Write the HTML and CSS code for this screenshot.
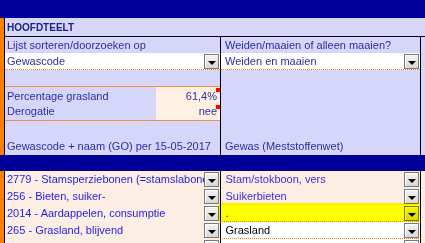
FILE: index.html
```html
<!DOCTYPE html>
<html>
<head>
<meta charset="utf-8">
<link rel="stylesheet" href="styles.css">
</head>
<body>
<div class="page">
  <div class="band top"></div>
  <div class="sec">
    <div class="edge"></div>
    <div class="main">
      <div class="hdr">HOOFDTEELT</div>
      <div class="cols">
        <div class="col left">
          <div class="lbl">Lijst sorteren/doorzoeken op</div>
          <div class="sel"><span class="txt">Gewascode</span><i class="btn"></i></div>
          <div class="gap"></div>
          <div class="box">
            <div class="kv a"><span class="k">Percentage grasland</span><span class="val">61,4%<b class="mark"></b></span></div>
            <div class="kv b"><span class="k">Derogatie</span><span class="val">nee<b class="mark"></b></span></div>
          </div>
          <div class="gap2"></div>
          <div class="lbl last">Gewascode + naam (GO) per 15-05-2017</div>
        </div>
        <div class="col right">
          <div class="lbl">Weiden/maaien of alleen maaien?</div>
          <div class="sel"><span class="txt">Weiden en maaien</span><i class="btn"></i></div>
          <div class="fill"></div>
          <div class="lbl last">Gewas (Meststoffenwet)</div>
        </div>
        <div class="strip"></div>
      </div>
    </div>
  </div>
  <div class="band mid"></div>
  <div class="sec lower">
    <div class="edge"></div>
    <div class="main rows">
      <div class="row">
        <div class="cl cream"><span class="t">2779 - Stamsperziebonen (=stamslabonen)</span><i class="btn"></i></div>
        <div class="cr cream"><span class="t v">Stam/stokboon, vers</span><i class="btn"></i></div>
        <div class="tail"></div>
      </div>
      <div class="row">
        <div class="cl cream"><span class="t">256 - Bieten, suiker-</span><i class="btn"></i></div>
        <div class="cr cream"><span class="t v">Suikerbieten</span><i class="btn"></i></div>
        <div class="tail"></div>
      </div>
      <div class="row">
        <div class="cl cream"><span class="t">2014 - Aardappelen, consumptie</span><i class="btn"></i></div>
        <div class="cr white"><span class="t k2">.</span><i class="btn"></i></div>
        <div class="tail"></div>
      </div>
      <div class="row">
        <div class="cl cream"><span class="t">265 - Grasland, blijvend</span><i class="btn"></i></div>
        <div class="cr white"><span class="t k2">Grasland</span><i class="btn"></i></div>
        <div class="tail"></div>
      </div>
      <div class="row">
        <div class="cl cream"><span class="t"></span><i class="btn"></i></div>
        <div class="cr white"><span class="t k2"></span><i class="btn"></i></div>
        <div class="tail"></div>
      </div>
      <div class="marker"></div>
    </div>
  </div>
</div>
</body>
</html>
```
FILE: styles.css
```css
html, body {
  margin: 0;
  padding: 0;
  background: #d6d6fa;
}
.page {
  width: 425px;
  height: 243px;
  overflow: hidden;
  font-family: "Liberation Sans", Arial, sans-serif;
  font-size: 11px;
  color: #2e2e9e;
  background: #d6d6fa;
}
.band {
  background: #000099;
}
.band.top { height: 18px; }
.band.mid { height: 16px; }
.sec {
  display: flex;
}
.edge {
  width: 4px;
  background: #ff8000;
  border-right: 1px solid #000;
  flex: none;
}
.main {
  width: 420px;
  display: flex;
  flex-direction: column;
}
.hdr {
  height: 18px;
  line-height: 19px;
  border-bottom: 1px solid #000;
  font-weight: bold;
  font-size: 10px;
  color: #202080;
  padding-left: 2px;
}
.cols {
  display: flex;
}
.col {
  display: flex;
  flex-direction: column;
}
.col.left { width: 215px; }
.col.right {
  width: 199px;
  border-left: 1px solid #000;
  border-right: 1px solid #000;
}
.strip { width: 4px; }
.lbl {
  height: 16px;
  line-height: 16px;
  padding-left: 2px;
  white-space: nowrap;
}
.lbl.last {
  height: 17px;
  line-height: 17px;
}
.right .lbl { padding-left: 4px; }
.sel {
  height: 16px;
  background: #fff;
  border-bottom: 1px dotted #ff8000;
  display: flex;
  align-items: center;
  justify-content: space-between;
  padding-left: 2px;
  padding-right: 1px;
}
.right .sel { padding-left: 4px; }
.gap { height: 16px; }
.gap2 { height: 17px; }
.fill { flex: 1; }
.box {
  border-top: 1px solid #f09040;
  border-bottom: 1px solid #f09040;
}
.kv {
  display: flex;
  justify-content: space-between;
}
.kv.a { height: 17px; line-height: 18px; }
.kv.b { height: 16px; line-height: 15px; }
.k { padding-left: 2px; }
.val {
  position: relative;
  width: 61px;
  padding-right: 3px;
  text-align: right;
  background: #fff0e4;
}
.mark {
  position: absolute;
  right: 0;
  top: 1px;
  width: 4px;
  height: 4px;
  background: #ff0000;
}
.btn {
  display: block;
  flex: none;
  width: 13px;
  height: 13px;
  border: 1px solid #7a7a7a;
  background: linear-gradient(#f4f4f4, #d8d8d8);
  box-shadow: inset 1px 1px 0 #fff;
  position: relative;
}
.btn::after {
  content: "";
  position: absolute;
  left: 3px;
  top: 6px;
  border-left: 4px solid transparent;
  border-right: 4px solid transparent;
  border-top: 4px solid #000;
}
.rows {
  position: relative;
}
.row {
  display: flex;
  height: 17px;
}
.cl, .cr {
  display: flex;
  align-items: center;
  justify-content: space-between;
  overflow: hidden;
}
.cl {
  width: 214px;
  padding-left: 2px;
  padding-right: 0;
}
.cl .btn { margin-right: 1px; }
.cr {
  width: 194px;
  padding-left: 4px;
  padding-right: 1px;
  border-left: 1px solid #000;
  border-right: 1px solid #000;
}
.cream { background: #fdeee3; }
.white {
  background: #fff;
  border-bottom: 1px dotted #ff8000;
  height: 16px;
}
.tail {
  width: 4px;
  background: #fdeee3;
}
.t {
  white-space: nowrap;
  overflow: hidden;
  flex: 1;
  color: #1e1ee6;
  line-height: 17px;
}
.t.v { color: #3a2ee0; }
.t.k2 { color: #000; }
.marker {
  position: absolute;
  left: 213px;
  top: 32px;
  width: 202px;
  height: 19px;
  background: #ffff00;
  mix-blend-mode: multiply;
  border-radius: 2px;
}
```
